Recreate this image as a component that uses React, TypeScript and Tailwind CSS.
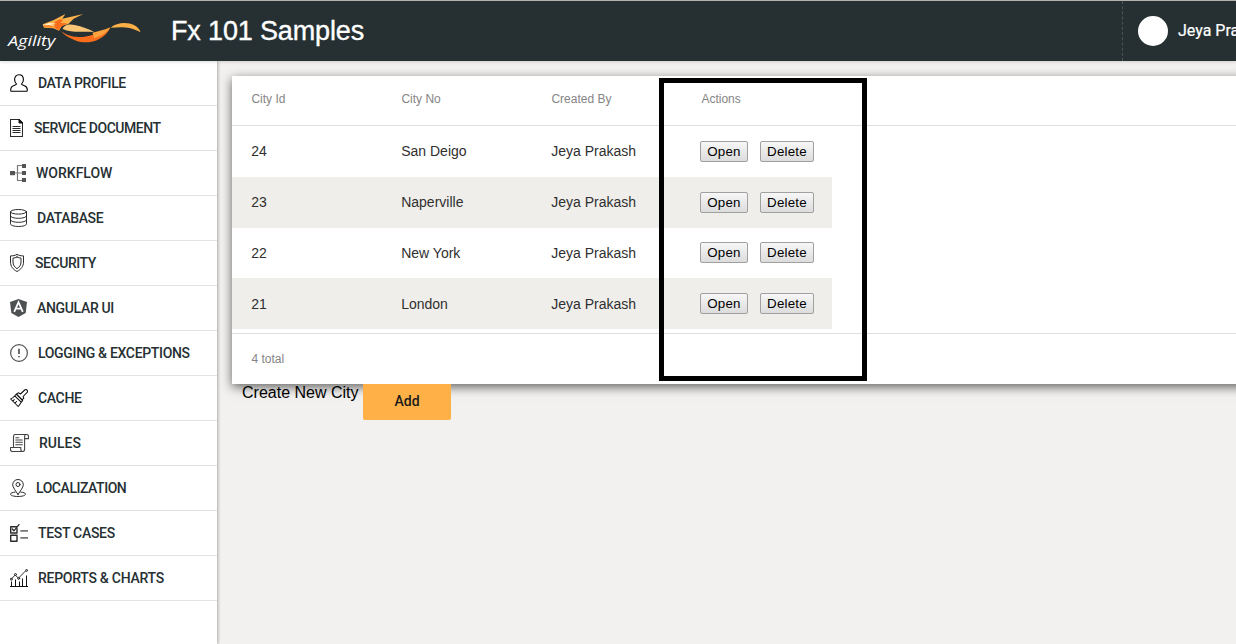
import React from "react";

const stroke = {
  fill: "none",
  stroke: "#2b2b2b",
  strokeWidth: 1,
  strokeLinecap: "round" as const,
  strokeLinejoin: "round" as const,
};

function Icon({ w, children }: { w: number; children: React.ReactNode }) {
  return (
    <svg width={w} height={18} viewBox={`0 0 ${w} 18`} className="shrink-0" {...stroke}>
      {children}
    </svg>
  );
}

const ProfileIcon = (
  <Icon w={18}>
    <g stroke="#000" strokeWidth="1.1">
      <path d="M9 .7c-2.700 0-4.400 2-4.400 4.800 0 2 .8 3.700 2 4.600-.4.700-1.300 1-2.600 1.500C1.700 12.400.7 13.700.7 15.800v.8c0 .4.3.7.7.700h15.200c.4 0 .7-.3.7-.7v-.8c0-2.100-1-3.400-3.300-4.200-1.300-.5-2.200-.8-2.600-1.500 1.200-.9 2-2.600 2-4.600C13.400 2.700 11.700.7 9 .7z" />
    </g>
  </Icon>
);
const DocumentIcon = (
  <Icon w={13}>
    <path d="M.5.5h8.500l3.500 3.500v13.500H.5z" strokeWidth="1.1" />
    <path d="M9 .5v3.500h3.500z" fill="#111" stroke="#111" />
    <path d="M2.500 7.500h8M2.500 9.500h8M2.500 11.500h8M2.500 13.500h8" strokeLinecap="butt" />
  </Icon>
);
const WorkflowIcon = (
  <Icon w={16}>
    <path d="M5 9h8M13 1.500H7.500v15H13" stroke="#777" strokeWidth="1.200" />
    <g fill="#555" stroke="none">
      <rect x="0" y="7" width="5" height="4.200" />
      <rect x="12" y="0" width="4" height="4" />
      <rect x="12" y="7" width="4" height="4" />
      <rect x="12" y="14" width="4" height="4" />
    </g>
  </Icon>
);
const DatabaseIcon = (
  <Icon w={17}>
    <ellipse cx="8.500" cy="2.800" rx="8" ry="2.300" />
    <path d="M.5 2.800v12c0 1.600 3.600 2.700 8 2.700s8-1.100 8-2.700v-12M.5 6.800c0 1.500 3.600 2.500 8 2.500s8-1 8-2.500M.5 10.800c0 1.500 3.600 2.500 8 2.500s8-1 8-2.500" />
  </Icon>
);
const SecurityIcon = (
  <Icon w={14}>
    <path d="M7 .5C5.200 1.500 3 1.900.5 1.900V8c0 4.300 2.500 7.500 6.500 9.500 4-2 6.500-5.200 6.500-9.500V1.900C11 1.900 8.800 1.500 7 .5z" />
    <path d="M7 3C5.800 3.700 4.500 4 3 4.100V8c0 3 1.500 5.100 4 6.700C9.500 13.100 11 11 11 8V4.100C9.500 4 8.200 3.700 7 3z" />
  </Icon>
);
const AngularIcon = (
  <Icon w={17}>
    <path d="M8.500 0 17 3l-1.300 11L8.500 18 1.300 14 0 3z" fill="#4d5152" stroke="none" />
    <path d="M4.200 12.800 8.500 3.200l4.300 9.600M6 9.700h5" stroke="#fff" strokeWidth="1.800" strokeLinecap="butt" strokeLinejoin="miter" />
  </Icon>
);
const LoggingIcon = (
  <Icon w={18}>
    <circle cx="9" cy="9" r="8.400" stroke="#555" strokeWidth="1.200" />
    <path d="M9 4.700v5.300M9 12v1.200" stroke="#555" strokeWidth="1.700" strokeLinecap="butt" />
  </Icon>
);
const CacheIcon = (
  <Icon w={18}>
    <g stroke="#111" strokeWidth="1.050">
      <path d="m10.500 5 4.200-4c.7-.6 1.700-.5 2.300.1.600.6.700 1.600.1 2.300l-4 4.100.7 1.700-1.700 1.700-5.700-5.700L8.300 3.800z" />
      <path d="m6.400 5.200 6.300 6.300c-1.500 1.300-2.700 3.800-4.500 6L.6 10c2.500-.5 4-3.400 5.800-4.800zM4.700 6.800l6.500 6.400M2.700 12l1.600-1.300M5 14.200l1.500-1.700" />
    </g>
  </Icon>
);
const RulesIcon = (
  <Icon w={19}>
    <g stroke="#444" strokeWidth="1.100">
      <path d="M3.500 12.500V2.400C3.500 1.300 4.300.5 5.400.5h10.900c-1.100 0-1.700.8-1.700 1.900v13.200c0 1.200-.8 1.900-2 1.900H2.300c-1.100 0-1.800-.8-1.800-1.900v-2.100h10.300v2.100c0 1.200.7 1.900 1.800 1.900M16.300.5c1.200 0 2.200.7 2.200 1.900v2.200h-3.900" />
      <path d="M5.800 3.700h3M5.800 6h6.500M5.800 8.300h6.500M5.800 10.700h6.500" />
    </g>
  </Icon>
);
const LocalizationIcon = (
  <Icon w={16}>
    <path d="M8 15.500C5.500 11.500 2.700 8.500 2.700 5.700a5.300 5.200 0 0 1 10.600 0c0 2.800-2.800 5.800-5.300 9.800z" />
    <circle cx="8" cy="5.500" r="2" />
    <path d="M5.200 13.100c-2.800.2-4.700 1-4.700 2.100 0 1.300 3.300 2.300 7.500 2.300s7.500-1 7.500-2.300c0-1.100-1.900-1.900-4.700-2.100" />
  </Icon>
);
const TestIcon = (
  <Icon w={18}>
    <path d="M7 4.500V9H.700V2.700h5.600M.7 11.200H7v6.100H.7z" strokeWidth="1.400" />
    <path d="m2.300 5 1.600 1.800L9 .6" strokeWidth="1.300" />
    <path d="M10.300 6.900H18M10.300 13.900H18" stroke="#777" strokeWidth="1.600" strokeLinecap="butt" />
  </Icon>
);
const ReportsIcon = (
  <Icon w={18}>
    <path d="M0 17.500h18" stroke="#111" strokeLinecap="butt" />
    <path d="M1.500 12.500v5M5.500 10.500v7M9.500 12.500v5M12.500 9.500v8M16.500 6.500v11" stroke="#111" strokeLinecap="butt" />
    <path d="M1.800 9.500 5.200 6l3.200 3.200 7.200-7.300" />
    <circle cx="1.300" cy="10.200" r="1" />
    <circle cx="5.500" cy="5.500" r="1" />
    <circle cx="8.700" cy="9.400" r="1" />
    <circle cx="16.600" cy="1.400" r="1" />
  </Icon>
);

const menu = [
  { label: "DATA PROFILE", icon: ProfileIcon, gap: "gap-[10px] tracking-[-0.4px]" },
  { label: "SERVICE DOCUMENT", icon: DocumentIcon, gap: "gap-[11px] tracking-[-0.47px]" },
  { label: "WORKFLOW", icon: WorkflowIcon, gap: "gap-[10px]" },
  { label: "DATABASE", icon: DatabaseIcon, gap: "gap-[10px] tracking-[-0.35px]" },
  { label: "SECURITY", icon: SecurityIcon, gap: "gap-[11px] tracking-[-0.45px]" },
  { label: "ANGULAR UI", icon: AngularIcon, gap: "gap-[10px] tracking-[-0.33px]" },
  { label: "LOGGING & EXCEPTIONS", icon: LoggingIcon, gap: "gap-[10px] tracking-[-0.33px]" },
  { label: "CACHE", icon: CacheIcon, gap: "gap-[10px] tracking-[-0.35px]" },
  { label: "RULES", icon: RulesIcon, gap: "gap-[10px]" },
  { label: "LOCALIZATION", icon: LocalizationIcon, gap: "gap-[10px] tracking-[-0.45px]" },
  { label: "TEST CASES", icon: TestIcon, gap: "gap-[10px] tracking-[-0.3px]" },
  { label: "REPORTS & CHARTS", icon: ReportsIcon, gap: "gap-[10px] tracking-[-0.27px]" },
];

const rows = [
  { id: "24", city: "San Deigo", by: "Jeya Prakash", height: "h-[51px]", buttons: "", text: "" },
  { id: "23", city: "Naperville", by: "Jeya Prakash", height: "h-[51px]", buttons: "", text: "" },
  { id: "22", city: "New York", by: "Jeya Prakash", height: "h-[50px]", buttons: "mb-[2px]", text: "" },
  { id: "21", city: "London", by: "Jeya Prakash", height: "h-[51px]", buttons: "", text: "pt-px" },
];

function Logo() {
  return (
    <svg width="150" height="50" viewBox="0 0 450 150" className="mt-1 shrink-0">
      <path d="M128 58 160 46 196 27 187 41 250 27 221 41 205 57 186 62 177 77 160 70 132 68z" fill="#fdb24b" />
      <path d="M163 52 178 43 190 44 181 54 202 55 182 66 177 76 164 69z" fill="#f96d1c" />
      <path d="m129 61 18-7 22 2-18 3 13 4-29 2z" fill="#fff0d0" />
      <path d="m131 61 16-1 18 4-13 4-20-1z" fill="#f98a27" />
      <path d="M188 72C190 62 205 55 224 60c22 5 42 12 58 21-37-3-65 4-94-9z" fill="#f8c577" />
      <path d="M181 76c13 12 30 20 55 20 35 0 67-14 95-28-20 40-68 52-103 39-21-8-37-17-47-31z" fill="#f96d1c" />
      <path d="M277 83c20-4 37-9 54-16-10 16-26 26-48 33-3-5-3-12-6-17z" fill="#fba13d" />
      <path d="M332 68c25-22 79-18 90 14-30-17-55-17-90-14z" fill="#fdb045" />
      <text
        x="24"
        y="122"
        textLength="142"
        lengthAdjust="spacingAndGlyphs"
        fontSize="46"
        fontStyle="italic"
        fill="#fff"
        fontFamily="'Open Sans', 'Noto Sans', sans-serif"
      >
        Agility
      </text>
    </svg>
  );
}

function RowButton({ label, width }: { label: string; width: string }) {
  return (
    <button
      className={`${width} h-[21px] rounded-[2px] border border-[#a0a0a0] bg-gradient-to-b from-[#f7f7f7] to-[#dcdcdc] text-[13.333px] leading-[19px] tracking-[0.2px] text-black`}
    >
      {label}
    </button>
  );
}

export default function App() {
  return (
    <div className="flex h-[644px] w-[1236px] flex-col overflow-hidden bg-[#f2f1ef] font-['Liberation_Sans',Arial,sans-serif]">
      <header className="z-10 flex h-[61px] shrink-0 border-t border-[#b1b1ae] bg-[#263033] text-white shadow-[0_1px_3px_rgba(0,0,0,0.15)]">
        <Logo />
        <h1 className="ml-[21px] w-[951px] shrink-0 whitespace-nowrap text-[27px] leading-[60px] tracking-[-0.15px] [-webkit-text-stroke:0.35px_white]">Fx 101 Samples</h1>
        <div className="flex w-[240px] shrink-0 items-center border-l border-dashed border-[#4d5354] pl-[15px]">
          <div className="h-[30px] w-[30px] shrink-0 rounded-full bg-white" />
          <span className="ml-[10px] whitespace-nowrap font-[Roboto,sans-serif] text-[16px] [-webkit-text-stroke:0.2px_white]">Jeya Prakash</span>
        </div>
      </header>
      <div className="flex min-h-0 flex-1">
        <nav className="w-[217px] shrink-0 bg-white shadow-[1px_0_3px_rgba(0,0,0,0.3)]">
          {menu.map((m) => (
            <a
              key={m.label}
              className={`flex h-[45px] items-center border-b border-[#e3e3e3] pl-[10px] font-[Roboto,sans-serif] text-[14px] font-medium whitespace-nowrap text-[#263033] ${m.gap}`}
            >
              {m.icon}
              <span>{m.label}</span>
            </a>
          ))}
        </nav>
        <main className="min-w-0 flex-1 pt-[15px] pl-[15px]">
          <section className="relative h-[308px] w-[1100px] bg-white shadow-[0_3px_10px_rgba(0,0,0,0.6)]">
            <div className="flex h-[50px] border-b border-[#dfdfdf] pt-[15px] pl-[19.4px] text-[12px] leading-[16px] text-[#858585]">
              <span className="w-[150px]">City Id</span>
              <span className="w-[150px]">City No</span>
              <span className="w-[150px]">Created By</span>
              <span>Actions</span>
            </div>
            {rows.map((r, i) => (
              <div
                key={r.id}
                className={`flex w-[600px] items-center pl-[19.2px] text-[14px] text-[#2f2f2f] ${r.height} ${i % 2 ? "bg-[#efeeea]" : ""}`}
              >
                <span className={`w-[150px] ${r.text}`}>{r.id}</span>
                <span className={`w-[150px] ${r.text}`}>{r.city}</span>
                <span className={`w-[148.8px] ${r.text}`}>{r.by}</span>
                <span className={`flex gap-3 ${r.buttons}`}>
                  <RowButton label="Open" width="w-[48px]" />
                  <RowButton label="Delete" width="w-[54px]" />
                </span>
              </div>
            ))}
            <div className="mt-1 border-t border-[#dfdfdf] pt-[17px] pl-[19.4px] text-[12px] leading-[16px] text-[#858585]">4 total</div>
            <div className="absolute top-[2px] left-[427px] h-[303px] w-[208px] border-[5px] border-black" />
          </section>
          <div className="relative flex pl-[10px]">
            <span className="w-[121px] text-[16px] leading-[17px] whitespace-nowrap text-black">Create New City</span>
            <button className="h-9 w-[88px] rounded-b-[2px] bg-[#ffb147] pb-[2px] font-[Roboto,sans-serif] text-[14px] font-medium text-[#1b1b1b]">Add</button>
          </div>
        </main>
      </div>
    </div>
  );
}
